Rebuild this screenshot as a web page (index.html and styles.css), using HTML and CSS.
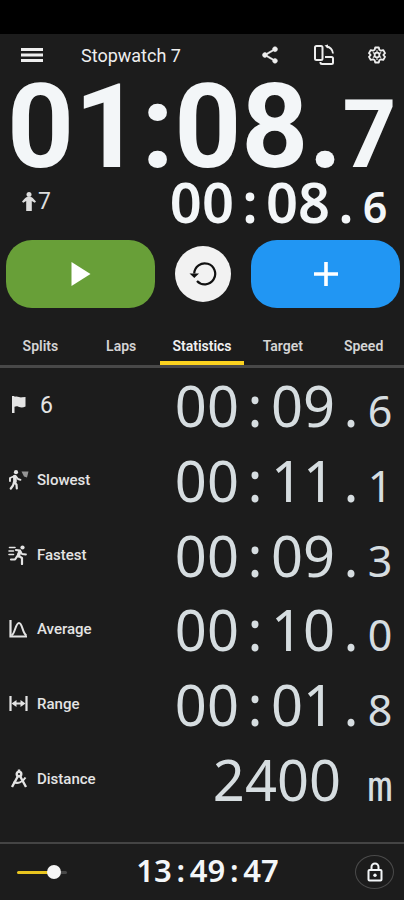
FILE: index.html
```html
<!DOCTYPE html>
<html lang="en">
<head>
<meta charset="utf-8">
<meta name="viewport" content="width=device-width, initial-scale=1">
<title>Stopwatch 7</title>
<link rel="stylesheet" href="styles.css">
</head>
<body>
<div class="app">
  <div class="status-bar"></div>
  <header class="app-bar">
    <button class="icon-button" aria-label="Menu">
      <svg width="22" height="16" viewBox="0 0 22 16"><path d="M0 2.5h22M0 8h22M0 13.5h22" stroke="currentColor" stroke-width="3"/></svg>
    </button>
    <h1 class="title">Stopwatch 7</h1>
    <div class="actions">
      <button class="icon-button" aria-label="Share">
        <svg width="20" height="20" viewBox="0 0 24 24" fill="currentColor" stroke="currentColor" stroke-width=".6"><path d="M18 16.08c-.76 0-1.44.3-1.96.77L8.91 12.7c.05-.23.09-.46.09-.7s-.04-.47-.09-.7l7.05-4.11c.54.5 1.25.81 2.04.81 1.66 0 3-1.34 3-3s-1.34-3-3-3-3 1.34-3 3c0 .24.04.47.09.7L8.04 9.81C7.5 9.31 6.79 9 6 9c-1.66 0-3 1.34-3 3s1.34 3 3 3c.79 0 1.5-.31 2.04-.81l7.12 4.16c-.05.21-.08.43-.08.65 0 1.61 1.31 2.92 2.92 2.92s2.92-1.31 2.92-2.92-1.31-2.92-2.92-2.92z"/></svg>
      </button>
      <button class="icon-button" aria-label="Rotate screen">
        <svg width="22" height="22" viewBox="0 0 22 22" fill="none" stroke="currentColor" stroke-width="2"><rect x="2" y="2" width="7.500" height="14" rx="1.5"/><path d="M12 13h6.500a1.500 1.500 0 0 1 1.500 1.500v4a1.500 1.500 0 0 1-1.500 1.500H9a1.500 1.500 0 0 1-1.500-1.500V18"/><path d="M13.500 2.500c3.500.5 6 3 6.500 7" stroke-width="1.800"/><path d="M11.500 1.500 15 .5v4z" fill="currentColor" stroke="none"/></svg>
      </button>
      <button class="icon-button" aria-label="Settings">
        <svg width="18" height="18" viewBox="0 0 24 24" fill="none" stroke="currentColor" stroke-width="2.400" stroke-linejoin="round"><path d="M9.600 2h4.800l.7 3 2.200 1.300 3-.9 2.400 4.100L20.400 12l2.300 2.500-2.400 4.100-3-.9L15.100 19l-.7 3H9.600l-.7-3-2.200-1.300-3 .9-2.400-4.100L3.600 12 1.300 9.500l2.400-4.100 3 .9L8.900 5z"/><circle cx="12" cy="12" r="3.200"/><path d="M12 5.500v3M12 15.500v3M6.500 8.800l2.500 1.500M15 13.700l2.500 1.500M17.500 8.800 15 10.300M9 13.700l-2.500 1.500" stroke-width="1.500"/></svg>
      </button>
    </div>
  </header>

  <main class="content">
    <div class="total" role="timer">01:08.<span class="total-fraction">7</span></div>
    <div class="current">
      <div class="laps-count">
        <svg width="14" height="19" viewBox="0 0 14 19" fill="currentColor"><circle cx="7" cy="2.500" r="2.500"/><path d="M5.500 5h3c1.800 0 3 2 5.500 4.500l-1.200 1.300L9.800 9v10H4.200V9l-3 1.800L0 9.500C2.500 7 3.700 5 5.500 5z"/></svg>
        <span>7</span>
      </div>
      <div class="clock clock-strong">00<i>:</i>08<i>.</i><small>6</small></div>
    </div>

    <div class="controls">
      <button class="control start" aria-label="Start">
        <svg width="20" height="24" viewBox="0 0 20 24"><path d="M.5 0 19.500 12 .5 24z" fill="currentColor"/></svg>
      </button>
      <button class="control reset" aria-label="Reset">
        <svg width="28" height="26" viewBox="0 0 28 26" fill="none"><path d="M5.200 12.500A10.500 10.500 0 1 1 8 20" stroke="currentColor" stroke-width="2.200"/><path d="M.5 12.500h9.500l-4.700 4.500z" fill="currentColor"/></svg>
      </button>
      <button class="control add" aria-label="Add lap">
        <svg width="24" height="24" viewBox="0 0 24 24"><path d="M12 0v24M0 12h24" stroke="currentColor" stroke-width="3.600"/></svg>
      </button>
    </div>

    <nav class="tabs" role="tablist">
      <button class="tab" role="tab">Splits</button>
      <button class="tab" role="tab">Laps</button>
      <button class="tab active" role="tab" aria-selected="true">Statistics</button>
      <button class="tab" role="tab">Target</button>
      <button class="tab" role="tab">Speed</button>
    </nav>

    <dl class="stats">
      <div class="stat">
        <dt class="label count"><svg width="20" height="20" viewBox="0 0 20 20" fill="currentColor"><path d="M4 1h2.500v1c3-1.500 5 .9 7.500.3L17.500 2v9.500c-3 1.400-5 .9-7 .2-1.700-.6-2.500-.5-4 .1V18H4z"/></svg><span>6</span></dt>
        <dd class="clock">00<i>:</i>09<i>.</i><small>6</small></dd>
      </div>
      <div class="stat">
        <dt class="label"><svg width="21" height="20" viewBox="0 0 21 20" fill="none" stroke="currentColor" stroke-width="2.200" stroke-linecap="round" stroke-linejoin="round"><circle cx="8" cy="2.200" r="2.100" fill="currentColor" stroke="none"/><path d="M6 12l2.500 2.500.3 4M6 12l-1 3.500L2.800 18.500"/><path d="M6.800 6.500 7 11.500" stroke-width="3.600"/><path d="M6.500 6 2 8v3M8 6.500l2 2.500 2.500.8" stroke-width="1.900"/><path d="M13.500 1.500h7L19 7.500l-3-1z" fill="currentColor" stroke="none" opacity=".6"/></svg><span>Slowest</span></dt>
        <dd class="clock">00<i>:</i>11<i>.</i><small>1</small></dd>
      </div>
      <div class="stat">
        <dt class="label"><svg width="21" height="20" viewBox="0 0 21 20" fill="none" stroke="currentColor" stroke-width="2.200" stroke-linecap="round" stroke-linejoin="round"><circle cx="14.500" cy="2.500" r="2.100" fill="currentColor" stroke="none"/><path d="M8 5l4 .7L10 10.500l4 2.500v6M9 11.500l-2 3H3"/><path d="m11.800 6.800-1.500 4" stroke-width="3.400"/><path d="m12.500 6.500 1.500 2.500 4 .5" stroke-width="1.800"/><path d="M1.500 2.500H7M1 6h4.500M1 9.500h4.500" stroke-width="1.600"/></svg><span>Fastest</span></dt>
        <dd class="clock">00<i>:</i>09<i>.</i><small>3</small></dd>
      </div>
      <div class="stat">
        <dt class="label"><svg width="21" height="20" viewBox="0 0 21 20" fill="none" stroke="currentColor" stroke-width="2.200"><path d="M2.500 1v16.500H19"/><path d="M3.500 16.500C7 15 7.500 4 11 4s3.500 11 7.500 12.500" stroke-width="2"/></svg><span>Average</span></dt>
        <dd class="clock">00<i>:</i>10<i>.</i><small>0</small></dd>
      </div>
      <div class="stat">
        <dt class="label"><svg width="21" height="20" viewBox="0 0 21 20" fill="none" stroke="currentColor" stroke-width="2.200"><path d="M2.500 2v15M18.500 2v15"/><path d="M6 9.500h9" stroke-width="2"/><path d="M3.500 9.500 8.500 6v7zM17.500 9.500l-5-3.500v7z" fill="currentColor" stroke="none"/></svg><span>Range</span></dt>
        <dd class="clock">00<i>:</i>01<i>.</i><small>8</small></dd>
      </div>
      <div class="stat">
        <dt class="label"><svg width="21" height="20" viewBox="0 0 21 20" fill="none" stroke="currentColor" stroke-width="2.400"><path d="M11 .5v3"/><circle cx="11" cy="5" r="2.300"/><path d="M10 7 4 18M12 7l6 11"/><path d="M5.500 13c4 2 9 .5 12-4.500" stroke-width="2"/></svg><span>Distance</span></dt>
        <dd class="clock">2400<small class="unit">m</small></dd>
      </div>
    </dl>
  </main>

  <footer class="bottom-bar">
    <div class="side"><input class="volume" type="range" min="0" max="100" value="83" aria-label="Volume"></div>
    <time class="time-of-day">13<i>:</i>49<i>:</i>47</time>
    <div class="side end">
      <button class="lock" aria-label="Lock screen">
        <svg width="16" height="20" viewBox="0 0 16 20" fill="none" stroke="currentColor" stroke-width="2"><rect x="1.500" y="8" width="13" height="10.500" rx="1"/><path d="M4.500 8V5a3.500 3.500 0 0 1 7 0v3"/><circle cx="8" cy="13.200" r="1.700" fill="currentColor" stroke="none"/></svg>
      </button>
    </div>
  </footer>
</div>
</body>
</html>
```
FILE: styles.css
```css
* {
  box-sizing: border-box;
}

body {
  margin: 0;
  background: #1c1c1c;
  color: #f3f6f8;
  font-family: Roboto, "Liberation Sans", sans-serif;
}

button {
  margin: 0;
  padding: 0;
  border: 0;
  background: none;
  color: inherit;
  font: inherit;
}

svg {
  display: block;
  flex: none;
}

.app {
  display: flex;
  flex-direction: column;
  min-height: 100vh;
}

.status-bar {
  height: 34px;
  background: #000;
}

.app-bar {
  display: flex;
  align-items: center;
  height: 42px;
  padding: 0 18px 0 21px;
  color: #eee;
}

.title {
  margin: 0 0 0 38px;
  font-size: 18px;
  font-weight: 400;
}

.actions {
  display: flex;
  gap: 33px;
  margin-left: auto;
}

.icon-button {
  display: flex;
  align-items: center;
}

.content {
  display: flex;
  flex: 1;
  flex-direction: column;
}

.total {
  padding: 0 12px 0 7px;
  font-size: 117px;
  font-weight: 700;
  line-height: 102px;
  white-space: nowrap;
}

.total-fraction {
  font-size: 94px;
  line-height: 80px;
}

.current {
  display: flex;
  align-items: center;
  justify-content: space-between;
  padding: 0 16px 0 22px;
}

.laps-count {
  display: flex;
  align-items: center;
  gap: 2px;
  color: #ddd;
  font-size: 23px;
}

.clock {
  margin: 0;
  color: #d6dde0;
  font-family: "Noto Sans", sans-serif;
  font-size: 56px;
  line-height: 46px;
  white-space: nowrap;
}

.clock-strong {
  color: #f3f6f8;
  font-weight: 600;
}

.clock i,
.time-of-day i {
  display: inline-block;
  width: 32px;
  font-style: normal;
  text-align: center;
}

.clock small {
  display: inline-block;
  width: 26px;
  font-size: 43px;
  line-height: 32px;
  text-align: center;
}

.clock .unit {
  margin-left: 26px;
  font-family: "DejaVu Sans Mono", monospace;
}

.controls {
  display: flex;
  align-items: center;
  gap: 20px;
  margin-top: 16px;
  padding: 0 4px 0 6px;
}

.control {
  display: flex;
  flex: 1;
  align-items: center;
  justify-content: center;
  height: 68px;
  border-radius: 26px;
  color: #fff;
}

.start {
  background: #689f38;
}

.reset {
  flex: none;
  width: 56px;
  height: 56px;
  border-radius: 50%;
  background: #f2f2f2;
  color: #111;
}

.add {
  background: #2196f3;
}

.tabs {
  display: grid;
  grid-template-columns: repeat(5, 1fr);
  margin-top: 18px;
  border-bottom: 3px solid #484848;
}

.tab {
  position: relative;
  height: 39px;
  color: #d4d4d4;
  font-size: 14px;
  font-weight: 600;
}

.active {
  color: #f0f0f0;
}

.active::after {
  content: "";
  position: absolute;
  right: -2px;
  bottom: 0;
  left: -2px;
  height: 4px;
  background: #fbd21f;
}

.stats {
  display: grid;
  flex: 1;
  grid-auto-rows: 1fr;
  margin: 0;
  padding: 0 11px 26px 8px;
}

.stat {
  display: flex;
  align-items: center;
  justify-content: space-between;
}

.label {
  display: flex;
  align-items: center;
  gap: 8px;
  color: #e4e4e4;
  font-size: 15px;
  font-weight: 500;
}

.count {
  gap: 12px;
  font-size: 23px;
  font-weight: 400;
}

.bottom-bar {
  display: flex;
  align-items: center;
  height: 58px;
  padding: 0 10px 0 17px;
  border-top: 2px solid #444;
}

.side {
  display: flex;
  flex: 1;
}

.end {
  justify-content: flex-end;
}

.volume {
  width: 50px;
  height: 16px;
  margin: 0;
  background: none;
  appearance: none;
}

.volume::-webkit-slider-runnable-track {
  height: 3px;
  border-radius: 2px;
  background: linear-gradient(to right, #e8c41f 74%, #484848 74%);
}

.volume::-webkit-slider-thumb {
  width: 14px;
  height: 14px;
  margin-top: -6px;
  border-radius: 50%;
  background: #f5f5f5;
  appearance: none;
}

.time-of-day {
  margin-left: 4px;
  font-family: "Noto Sans", sans-serif;
  font-size: 31px;
  font-weight: 600;
  line-height: 40px;
  padding-bottom: 4px;
}

.time-of-day i {
  width: 18px;
}

.lock {
  display: flex;
  align-items: center;
  justify-content: center;
  width: 39px;
  height: 34px;
  border: 1px solid #4a4a4a;
  border-radius: 50%;
}
```
